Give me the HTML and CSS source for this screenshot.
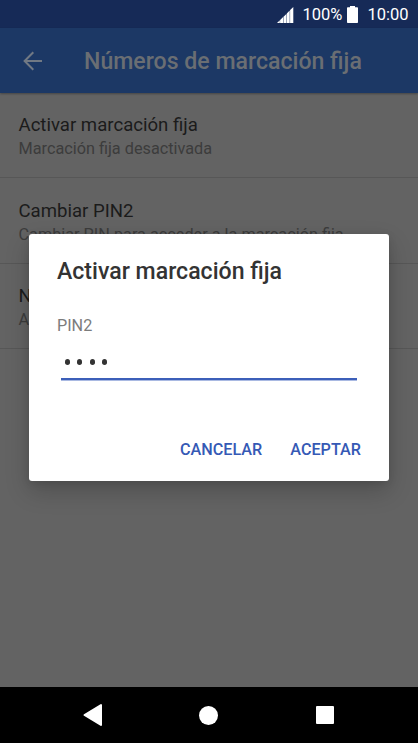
FILE: index.html
```html
<!DOCTYPE html>
<html lang="es">
<head>
    <meta charset="UTF-8">
    <meta name="viewport" content="width=device-width, initial-scale=1.0">
    <title>Números de marcación fija</title>
    <link rel="stylesheet" href="styles.css">
</head>
<body>
    <div class="phone">
        <div class="status">
            <svg class="signal" width="17" height="16" viewBox="0 0 17 16">
                <path d="M0 16L2.8 13.3V16zM3.1 12.9L6.1 10.1V16H3.1zM6.5 9.7L9.4 6.9V16H6.5zM9.8 6.4L12.7 3.6V16H9.8zM13.1 3.1L16.3 0V16h-3.2z" fill="#fff"/>
            </svg>
            <span class="percent">100%</span>
            <svg class="battery" width="11" height="17" viewBox="0 0 11 17">
                <path d="M3 0h5v1.3h2.2q.8 0 .8.8v14.1q0 .8-.8.8H.8q-.8 0-.8-.8V2.1Q0 1.3.8 1.3H3z" fill="#fff"/>
            </svg>
            <span class="time">10:00</span>
        </div>
        <div class="header">
            <svg class="back" width="20" height="20" viewBox="0 0 20 20">
                <path d="M19 10H2M10.3 1.3L1.6 10l8.7 8.7" fill="none" stroke="#717984" stroke-width="2"/>
            </svg>
            <h1>Números de marcación fija</h1>
        </div>
        <div class="list">
            <div class="item">
                <h2>Activar marcación fija</h2>
                <p>Marcación fija desactivada</p>
            </div>
            <div class="item">
                <h2>Cambiar PIN2</h2>
                <p>Cambiar PIN para acceder a la marcación fija</p>
            </div>
            <div class="item">
                <h2>N</h2>
                <p>A</p>
            </div>
        </div>
        <div class="nav">
            <svg width="20" height="24" viewBox="0 0 20 24">
                <path d="M18 2v20L1.5 12z" fill="#fff" stroke="#fff" stroke-width="2" stroke-linejoin="round"/>
            </svg>
            <span class="home"></span>
            <span class="recent"></span>
        </div>
    </div>
    <div class="dialog">
        <h3>Activar marcación fija</h3>
        <label>PIN2</label>
        <div class="pin">
            <i></i><i></i><i></i><i></i>
        </div>
        <div class="buttons">
            <span class="cancel">CANCELAR</span>
            <span class="ok">ACEPTAR</span>
        </div>
    </div>
</body>
</html>
```
FILE: styles.css
```css
* {
    padding: 0;
    margin: 0;
    box-sizing: border-box;
}
body {
    width: 418px;
    height: 743px;
    overflow: hidden;
    font-family: Roboto, sans-serif;
    background-color: #636363;
}
h1, h2, h3 {
    font-weight: 500;
    white-space: nowrap;
}
.phone {
    display: flex;
    flex-direction: column;
    height: 743px;
}
.status {
    display: flex;
    justify-content: flex-end;
    align-items: center;
    height: 28px;
    padding: 1px 9.5px 0 0;
    color: #fff;
    font-size: 16.5px;
    background-color: #162a57;
}
.percent {
    margin: 0 5px 0 9px;
}
.time {
    margin-left: 9px;
}
.header {
    display: flex;
    align-items: center;
    height: 65px;
    padding: 0 0 0 23px;
    background-color: #1c3865;
    box-shadow: 0 1px 2px rgba(0,0,0,0.3);
}
.header h1 {
    margin-left: 41px;
    padding-top: 1px;
    font-size: 23.1px;
    color: #6a6e73;
}
.list {
    flex: 1;
}
.item {
    height: 85.4px;
    padding: 20.3px 18.5px 0;
    border-bottom: 1px solid #575757;
}
.item h2 {
    font-size: 18.6px;
    line-height: 24px;
    font-weight: 400;
    color: #1b1b1b;
}
.item p {
    font-size: 16.25px;
    line-height: 23px;
    white-space: nowrap;
    color: #3c3c3c;
}
.nav {
    display: flex;
    align-items: center;
    height: 56px;
    padding-left: 83px;
    background-color: #000;
}
.home {
    width: 19px;
    height: 19px;
    margin-left: 96px;
    border-radius: 50%;
    background-color: #fff;
}
.recent {
    width: 18px;
    height: 18px;
    margin-left: 98px;
    border-radius: 1px;
    background-color: #fff;
}
/* popup over the list */
.dialog {
    position: absolute;
    left: 29px;
    top: 233.5px;
    width: 360px;
    height: 247.7px;
    padding: 24.5px 27.5px 0 28px;
    border-radius: 3px;
    background-color: #fff;
    box-shadow: 0 10px 24px rgba(0,0,0,0.2), 0 2px 8px rgba(0,0,0,0.1);
}
.dialog h3 {
    font-size: 23.1px;
    line-height: 28px;
    color: #333;
}
.dialog label {
    display: block;
    margin-top: 29px;
    font-size: 16.2px;
    line-height: 22px;
    color: #7c7c7c;
}
.pin {
    display: flex;
    gap: 7.4px;
    height: 43px;
    margin: 0 5px 0 4px;
    padding: 22px 0 0 4px;
    border-bottom: 2px solid #3c5fb9;
    box-shadow: 0 1px 0 #a9b9e2;
}
.pin i {
    width: 5px;
    height: 5.5px;
    border-radius: 50%;
    background-color: #333;
}
.buttons {
    display: flex;
    justify-content: flex-end;
    margin-top: 59px;
    font-size: 16.2px;
    line-height: 22px;
    font-weight: 500;
    color: #3559b5;
}
.cancel {
    margin-right: 28px;
}
.ok {
    margin-right: 0.5px;
}
```
